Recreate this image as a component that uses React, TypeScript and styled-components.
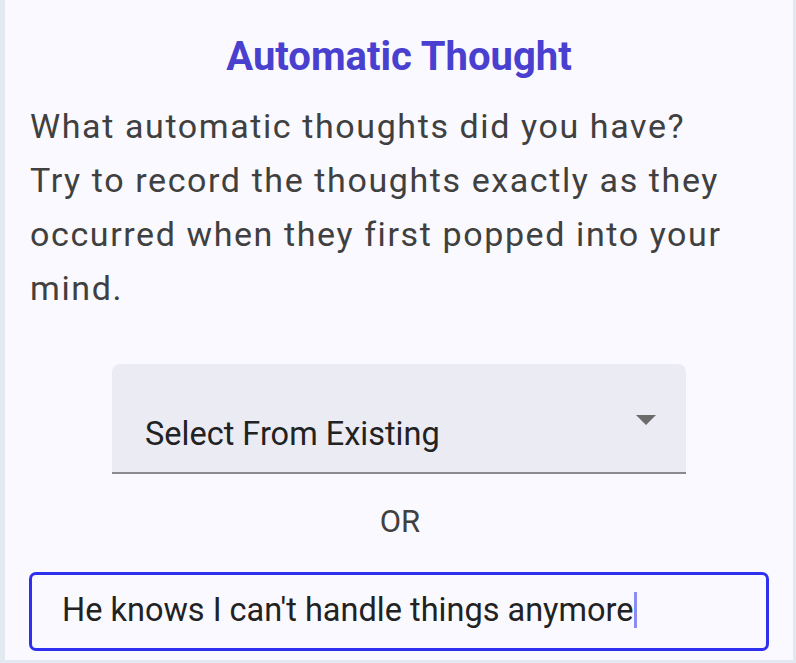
import React from "react";
import styled, { createGlobalStyle } from "styled-components";

const Global = createGlobalStyle`
  html, body { margin: 0; padding: 0; background: #e3e9f1; }
  body { font-family: Roboto, "Noto Sans", sans-serif; overflow: hidden; }
`;

const Page = styled.div`
  width: 796px;
  height: 663px;
  display: flex;
  flex-direction: column;
  overflow: hidden;
`;

const Card = styled.section`
  margin: 0 3px 0 5px;
  height: 660px;
  flex-shrink: 0;
  background: #f9f9ff;
  display: flex;
  flex-direction: column;
  padding: 0 24px;
  box-sizing: border-box;
`;

const Title = styled.h1`
  margin: 33px 0 0;
  text-align: center;
  font-size: 40px;
  line-height: 48px;
  font-weight: 700;
  color: #4a40cf;
  letter-spacing: 0;
`;

const Prompt = styled.p`
  margin: 18px 0 0 1px;
  font-size: 34px;
  line-height: 54px;
  color: #404040;
  letter-spacing: 1.6px;
  white-space: nowrap;
`;

const SelectBox = styled.div`
  margin: 49px 0 0 83px;
  width: 574px;
  height: 110px;
  flex-shrink: 0;
  box-sizing: border-box;
  background: #ebebf3;
  border-radius: 8px 8px 0 0;
  border-bottom: 2px solid #8a8a8e;
  display: flex;
  align-items: flex-start;
  padding: 51px 30px 0 33px;
  position: relative;
`;

const SelectLabel = styled.span`
  font-size: 32.5px;
  line-height: 38px;
  color: #222;
`;

const Caret = styled.span`
  position: absolute;
  right: 30px;
  top: 51px;
  width: 0;
  height: 0;
  border-left: 10px solid transparent;
  border-right: 10px solid transparent;
  border-top: 10px solid #6b6b6b;
`;

const Or = styled.div`
  margin-top: 30px;
  text-align: center;
  font-size: 31px;
  line-height: 36px;
  color: #404040;
  padding-left: 2px;
`;

const InputBox = styled.div`
  margin: 32px 0 0 0;
  width: 740px;
  height: 79px;
  flex-shrink: 0;
  box-sizing: border-box;
  border: 3px solid #2f2ff0;
  border-radius: 7px;
  display: flex;
  align-items: center;
  padding: 0 0 4px 30px;
`;

const InputText = styled.span`
  font-size: 32.5px;
  color: #222;
  line-height: 38px;
  display: inline-flex;
  align-items: center;
  white-space: pre;
`;

const TextCaret = styled.span`
  display: inline-block;
  width: 3px;
  height: 36px;
  background: #8c8cf5;
  margin-left: 1px;
`;

const Footer = styled.div`
  margin: 0 19px 0 21px;
  height: 3px;
  background: #e3e9f1;
`;

export default function App() {
  return (
    <Page>
      <Global />
      <Card>
        <Title>Automatic Thought</Title>
        <Prompt>
          What automatic thoughts did you have?
          <br />
          Try to record the thoughts exactly as they
          <br />
          occurred when they first popped into your
          <br />
          mind.
        </Prompt>
        <SelectBox>
          <SelectLabel>Select From Existing</SelectLabel>
          <Caret />
        </SelectBox>
        <Or>OR</Or>
        <InputBox>
          <InputText>
            He knows I can't handle things anymore
            <TextCaret />
          </InputText>
        </InputBox>
      </Card>
      <Footer />
    </Page>
  );
}
